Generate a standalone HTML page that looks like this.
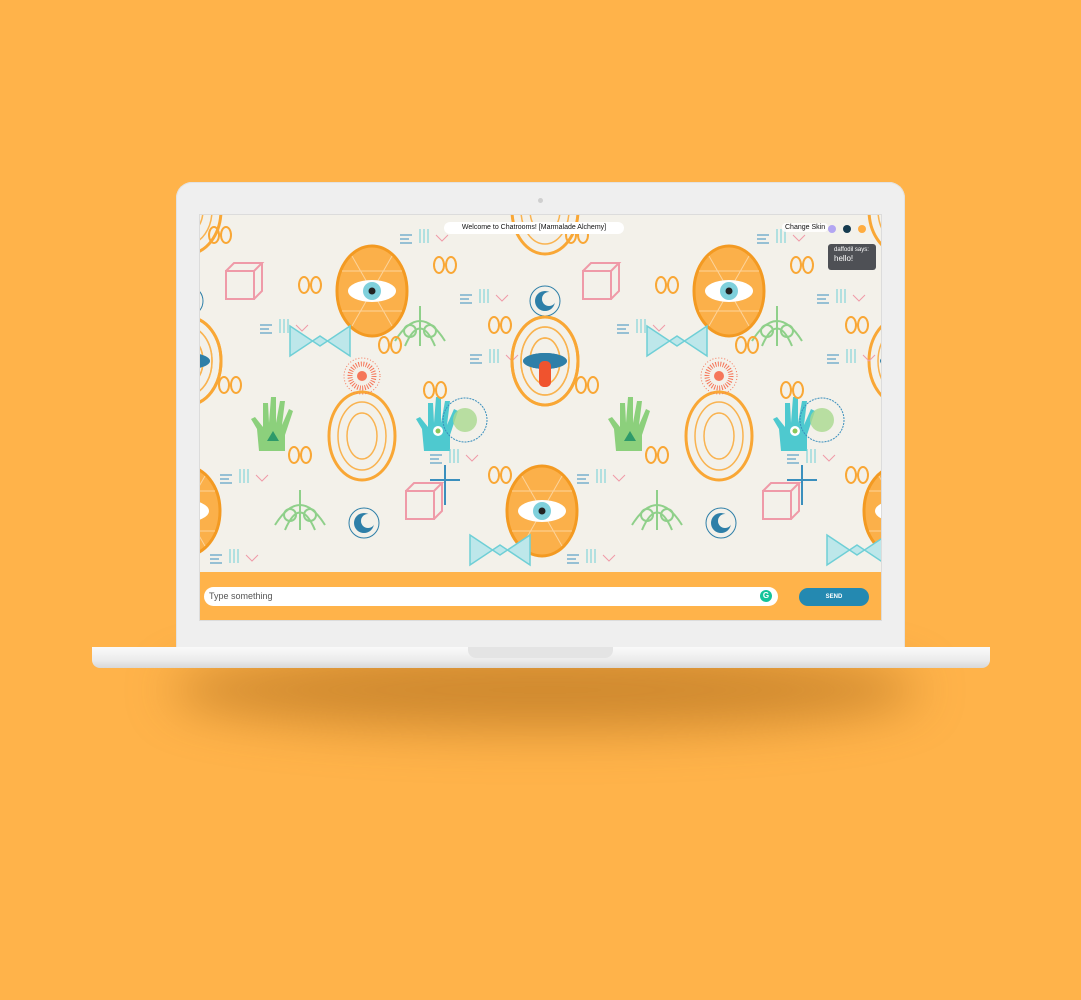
<!DOCTYPE html>
<html><head><meta charset="utf-8"><style>
html,body{margin:0;padding:0}
body{width:1081px;height:1000px;background:#ffb34a;position:relative;overflow:hidden;font-family:"Liberation Sans",sans-serif}
.shadow{position:absolute;left:170px;top:650px;width:750px;height:80px;border-radius:50%;background:rgba(160,95,20,.5);filter:blur(24px)}
.lid{position:absolute;left:176px;top:182px;width:729px;height:470px;background:#efefef;border-radius:16px 16px 0 0;box-shadow:inset 0 0 0 1px #e2e2e2}
.cam{position:absolute;left:538px;top:198px;width:5px;height:5px;border-radius:50%;background:#cfcfcf}
.screen{position:absolute;left:199px;top:214px;width:683px;height:407px;background:#f3f1ea;overflow:hidden;border:1px solid #dcdcdc;box-sizing:border-box}
.bar{position:absolute;left:0;top:357px;width:683px;height:50px;background:#ffb34a}
.input{position:absolute;left:4px;top:15px;width:574px;height:19px;background:#fff;border-radius:10px;font-size:9px;color:#555;line-height:19px;padding-left:5px;box-sizing:border-box}
.g{position:absolute;right:6px;top:3px;width:12px;height:12px;border-radius:50%;background:#15c39a;color:#fff;font-size:8px;line-height:12px;text-align:center;font-weight:bold}
.send{position:absolute;left:599px;top:16px;width:70px;height:18px;border-radius:9px;background:#2489b1;color:#fff;font-size:6px;font-weight:bold;text-align:center;line-height:18px}
.title{position:absolute;left:244px;top:7px;width:180px;height:12px;background:#fff;border-radius:6px;font-size:7px;text-align:center;line-height:12px;color:#111}
.skin{position:absolute;left:582px;top:8px;font-size:7px;color:#111;background:rgba(255,255,255,.85);padding:1px 3px;border-radius:4px}
.dot{position:absolute;top:10px;width:8px;height:8px;border-radius:50%}
.msg{position:absolute;left:628px;top:29px;width:48px;height:26px;background:#4e5055;border-radius:3px;color:#fff;font-size:6px;padding:3px 6px;box-sizing:border-box;line-height:1.2}
.msg b{font-weight:normal;font-size:8px}
.base{position:absolute;left:92px;top:647px;width:898px;height:21px;background:linear-gradient(#fafafa,#ececec 60%,#d8d8d8);border-radius:0 0 8px 8px}
.notch{position:absolute;left:468px;top:647px;width:145px;height:11px;background:#e4e4e4;border-radius:0 0 8px 8px}
</style></head><body>
<div class="shadow"></div>
<div class="lid"></div>
<div class="cam"></div>
<div class="screen">
<svg width="683" height="357" style="position:absolute;left:0;top:0">
<defs>
<g id="eyeegg"><ellipse rx="35" ry="45" fill="#fbb04a" stroke="#f39a22" stroke-width="3"/><path d="M-30 -20 L30 -20 M-30 20 L30 20 M-20 -35 L20 35 M20 -35 L-20 35" stroke="#fcd39a" stroke-width="1"/><ellipse rx="24" ry="11" fill="#fff"/><circle r="9" fill="#7fd0dc"/><circle r="3.5" fill="#222"/></g>
<g id="oegg"><ellipse rx="33" ry="44" fill="none" stroke="#f9a735" stroke-width="3"/><ellipse rx="24" ry="34" fill="none" stroke="#f9b350" stroke-width="1.5"/><ellipse rx="15" ry="23" fill="none" stroke="#f9b350" stroke-width="1.5"/></g>
<g id="tongue"><use href="#oegg"/><ellipse rx="22" ry="8" fill="#2e7fa8"/><rect x="-6" y="0" width="12" height="26" rx="5" fill="#f0532e"/></g>
<g id="sun"><circle r="18" fill="none" stroke="#f5775a" stroke-width="1" stroke-dasharray="1 2"/><circle r="12" fill="none" stroke="#f5775a" stroke-width="5" stroke-dasharray="1 1.5"/><circle r="5" fill="#f5775a"/></g>
<g id="moon"><circle r="15" fill="none" stroke="#2e7fa8" stroke-width="1"/><circle r="10" fill="#2e7fa8"/><circle cx="4" cy="-2" r="7" fill="#f3f1ea"/></g>
<g id="chand"><path d="M-14 20 L-16 -2 L-22 -12 L-18 -14 L-10 -4 L-10 -28 L-5 -28 L-4 -8 L-2 -34 L3 -34 L3 -8 L7 -30 L12 -30 L9 -6 L16 -22 L20 -20 L12 4 L12 20Z" fill="#4ec9cf"/><circle r="5" fill="#fff"/><circle r="2.5" fill="#8ac75a"/></g>
<g id="ghand"><path d="M-14 20 L-16 -2 L-22 -12 L-18 -14 L-10 -4 L-10 -28 L-5 -28 L-4 -8 L-2 -34 L3 -34 L3 -8 L7 -30 L12 -30 L9 -6 L16 -22 L20 -20 L12 4 L12 20Z" fill="#8cd07c"/><path d="M-6 10 L0 0 L6 10Z" fill="#2e9a6a"/></g>
<g id="small"><ellipse cx="-6" rx="5" ry="8" fill="none" stroke="#f9a735" stroke-width="2"/><ellipse cx="6" rx="5" ry="8" fill="none" stroke="#f9a735" stroke-width="2"/></g>
<g id="green"><path d="M-25 10 Q0 -30 25 10 M-15 15 Q0 -20 15 15 M0 15 L0 -25" fill="none" stroke="#8fd08a" stroke-width="2"/><circle cx="-10" cy="0" r="6" fill="none" stroke="#8fd08a" stroke-width="2"/><circle cx="10" cy="0" r="6" fill="none" stroke="#8fd08a" stroke-width="2"/></g>
<g id="pink"><rect x="-14" y="-14" width="28" height="28" fill="none" stroke="#ef9aa8" stroke-width="2"/><path d="M-14 -14 L-6 -22 L22 -22 L14 -14 M14 14 L22 6 L22 -22" fill="none" stroke="#ef9aa8" stroke-width="2"/></g>
<g id="cyan"><path d="M-30 -15 L0 5 L30 -15 L30 15 L0 -5 L-30 15Z" fill="#bde7ea" stroke="#6fcfd6" stroke-width="1.5"/></g>
<g id="marks" stroke-width="1" fill="none"><path d="M0 0 h12 M0 4 h9 M0 8 h12" stroke="#3a8fbd"/><path d="M20 -6 v14 M24 -6 v14 M28 -6 v14" stroke="#6fcfd6"/><path d="M36 0 l6 6 l6 -6" stroke="#ef9aa8"/></g>
<g id="tile">
<use href="#eyeegg" x="172" y="76"/>
<use href="#oegg" x="162" y="221"/>
<use href="#tongue" x="345" y="146"/>
<use href="#tongue" x="-12" y="146"/>
<use href="#eyeegg" x="342" y="296"/>
<use href="#oegg" x="345" y="-5"/>
<use href="#sun" x="162" y="161"/>
<use href="#moon" x="345" y="86"/>
<use href="#moon" x="164" y="308"/>
<use href="#chand" x="238" y="216"/>
<use href="#ghand" x="73" y="216"/>
<use href="#green" x="220" y="116"/>
<use href="#green" x="100" y="300"/>
<use href="#pink" x="40" y="70"/>
<use href="#pink" x="220" y="290"/>
<use href="#cyan" x="120" y="126"/>
<use href="#cyan" x="300" y="335"/>
<use href="#small" x="110" y="70"/>
<use href="#small" x="245" y="50"/>
<use href="#small" x="300" y="110"/>
<use href="#small" x="100" y="240"/>
<use href="#small" x="235" y="175"/>
<use href="#small" x="300" y="260"/>
<use href="#small" x="190" y="130"/>
<use href="#small" x="20" y="20"/>
<use href="#small" x="30" y="170"/>
<use href="#marks" x="60" y="110"/>
<use href="#marks" x="260" y="80"/>
<use href="#marks" x="20" y="260"/>
<use href="#marks" x="270" y="140"/>
<use href="#marks" x="10" y="340"/>
<use href="#marks" x="200" y="20"/>
<use href="#marks" x="230" y="240"/>
<circle cx="265" cy="205" r="22" fill="none" stroke="#3a8fbd" stroke-width="1" stroke-dasharray="2 1"/>
<circle cx="265" cy="205" r="12" fill="#a9d98f" opacity=".8"/>
<path d="M245 250 L245 290 M230 265 L260 265" stroke="#3a8fbd" stroke-width="2"/>
</g>
</defs>
<use href="#tile"/>
<use href="#tile" x="357"/>
<use href="#tile" x="-357"/>
</svg>
<div class="title">Welcome to Chatrooms! [Marmalade Alchemy]</div>
<div class="skin">Change Skin</div>
<div class="dot" style="left:628px;background:#b3a6f2"></div>
<div class="dot" style="left:643px;background:#153b4f"></div>
<div class="dot" style="left:658px;background:#ffac3f"></div>
<div class="msg">daffodil says:<br><b>hello!</b></div>
<div class="bar"><div class="input">Type something<div class="g">G</div></div><div class="send">SEND</div></div>
</div>
<div class="base"></div>
<div class="notch"></div>
</body></html>
